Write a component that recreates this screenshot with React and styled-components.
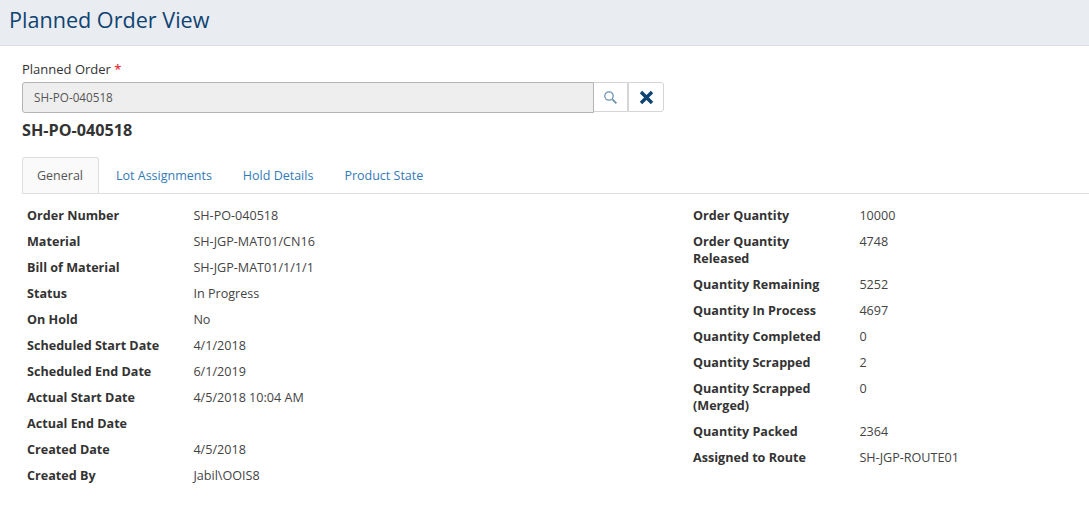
import styled, { createGlobalStyle } from "styled-components";

const GlobalStyle = createGlobalStyle`
  html, body {
    margin: 0;
    padding: 0;
    background: #fff;
    font-family: "Open Sans", "Noto Sans", sans-serif;
    font-size: 12.6px;
    color: #333;
  }
`;

const Page = styled.div`
  width: 1089px;
  height: 509px;
  overflow: hidden;
`;

const Header = styled.header`
  height: 45px;
  background: #e9ecf1;
  border-bottom: 1px solid #dcdfe3;
  padding-left: 9px;
  display: flex;
  align-items: center;
`;

const Title = styled.h1`
  margin: 0 0 5px;
  font-size: 21.6px;
  font-weight: 400;
  line-height: 30px;
  color: #0f4472;
`;

const Content = styled.div`
  padding: 15px 0 0 22px;
`;

const FieldLabel = styled.label`
  display: block;
  font-size: 13px;
  line-height: 17px;
  margin-bottom: 4px;
  color: #333;

  span {
    color: #e8323c;
    font-weight: 600;
  }
`;

const SearchRow = styled.div`
  display: flex;
  width: 642px;
  height: 31px;
`;

const LookupInput = styled.div`
  flex: 1;
  box-sizing: border-box;
  background: #eeeeee;
  border: 1px solid #b4b4b4;
  border-radius: 3px 0 0 3px;
  padding-left: 11px;
  line-height: 29px;
  font-size: 11.7px;
  color: #555;
`;

const IconButton = styled.button`
  box-sizing: border-box;
  width: ${(p) => p.$width}px;
  height: 30px;
  padding: 0;
  background: #fff;
  border: 1px solid #d5d5d5;
  border-left: ${(p) => (p.$last ? "1px solid #d5d5d5" : "none")};
  border-radius: ${(p) => (p.$last ? "0 3px 3px 0" : "0")};
  display: flex;
  align-items: center;
  justify-content: center;
`;

const OrderHeading = styled.h2`
  margin: 6px 0 16px;
  font-size: 16.2px;
  line-height: 22px;
  font-weight: 700;
  color: #333;
`;

const Tabs = styled.nav`
  display: flex;
  height: 36px;
  border-bottom: 1px solid #dedede;
`;

const Tab = styled.a`
  box-sizing: border-box;
  height: 36px;
  width: ${(p) => (p.$active ? "77px" : "auto")};
  padding: 9px 14px 0;
  margin-right: ${(p) => (p.$active ? "2px" : "1px")};
  font-size: 12.5px;
  line-height: 18px;
  color: ${(p) => (p.$active ? "#555" : "#337ab7")};
  background: ${(p) => (p.$active ? "#fafafa" : "transparent")};
  border: 1px solid ${(p) => (p.$active ? "#dedede" : "transparent")};
  border-bottom: none;
  border-radius: 3px 3px 0 0;
`;

const Details = styled.div`
  display: grid;
  grid-template-columns: 666px 1fr;
  padding: 13px 0 0 5px;
`;

const Column = styled.dl`
  margin: 0;
  display: flex;
  flex-direction: column;
  gap: 9px;
`;

const Row = styled.div`
  display: grid;
  grid-template-columns: 166.4px 1fr;
  line-height: 17px;
`;

const Term = styled.dt`
  font-weight: 700;
  color: #333;
  width: 134px;
`;

const Value = styled.dd`
  margin: 0;
  min-height: 17px;
  font-size: 12.6px;
  color: #444;
`;

const leftRows = [
  ["Order Number", "SH-PO-040518"],
  ["Material", "SH-JGP-MAT01/CN16"],
  ["Bill of Material", "SH-JGP-MAT01/1/1/1"],
  ["Status", "In Progress"],
  ["On Hold", "No"],
  ["Scheduled Start Date", "4/1/2018"],
  ["Scheduled End Date", "6/1/2019"],
  ["Actual Start Date", "4/5/2018 10:04 AM"],
  ["Actual End Date", ""],
  ["Created Date", "4/5/2018"],
  ["Created By", "Jabil\\OOIS8"],
];

const rightRows = [
  ["Order Quantity", "10000"],
  ["Order Quantity Released", "4748"],
  ["Quantity Remaining", "5252"],
  ["Quantity In Process", "4697"],
  ["Quantity Completed", "0"],
  ["Quantity Scrapped", "2"],
  ["Quantity Scrapped (Merged)", "0"],
  ["Quantity Packed", "2364"],
  ["Assigned to Route", "SH-JGP-ROUTE01"],
];

const tabs = ["General", "Lot Assignments", "Hold Details", "Product State"];

const DetailColumn = ({ rows }) => (
  <Column>
    {rows.map(([term, value]) => (
      <Row key={term}>
        <Term>{term}</Term>
        <Value>{value}</Value>
      </Row>
    ))}
  </Column>
);

const App = () => (
  <Page>
    <GlobalStyle />
    <Header>
      <Title>Planned Order View</Title>
    </Header>
    <Content>
      <FieldLabel>
        Planned Order <span>*</span>
      </FieldLabel>
      <SearchRow>
        <LookupInput>SH-PO-040518</LookupInput>
        <IconButton $width={34}>
          <svg width="15" height="15" viewBox="0 0 15 15" fill="none" stroke="#6f93b3">
            <circle cx="6" cy="6" r="4.2" strokeWidth="1.3" />
            <path d="M9.3 9.3 L13.4 13.4" strokeWidth="1.8" />
          </svg>
        </IconButton>
        <IconButton $width={36} $last>
          <svg width="15" height="15" viewBox="0 0 15 15" fill="none" stroke="#0f4472">
            <path d="M2 2 L13 13 M13 2 L2 13" strokeWidth="3.4" />
          </svg>
        </IconButton>
      </SearchRow>
      <OrderHeading>SH-PO-040518</OrderHeading>
      <Tabs>
        {tabs.map((tab, i) => (
          <Tab key={tab} $active={i === 0}>
            {tab}
          </Tab>
        ))}
      </Tabs>
      <Details>
        <DetailColumn rows={leftRows} />
        <DetailColumn rows={rightRows} />
      </Details>
    </Content>
  </Page>
);

export default App;
